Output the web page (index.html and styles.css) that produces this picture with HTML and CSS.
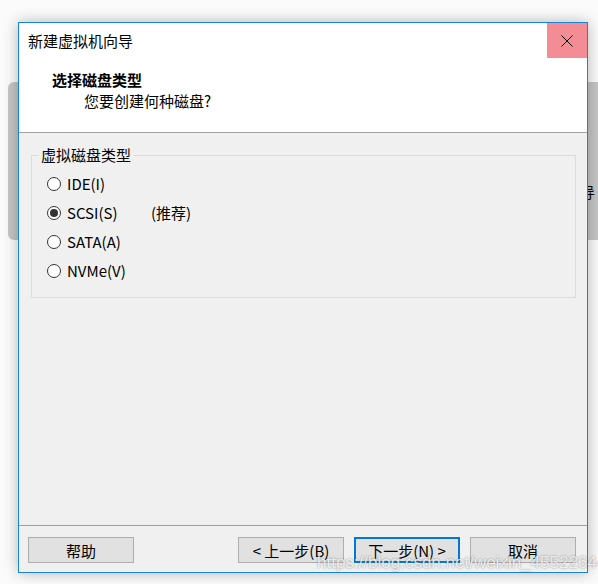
FILE: index.html
```html
<!DOCTYPE html>
<html lang="zh-CN">
<head>
  <meta charset="UTF-8">
  <title>新建虚拟机向导</title>
  <link rel="stylesheet" href="styles.css">
</head>
<body>
  <!-- window behind the dialog -->
  <div class="back-window"><span class="back-text">导</span></div>

  <div class="dialog">
    <div class="titlebar">
      <span class="title">新建虚拟机向导</span>
      <div class="close-btn">
        <svg width="12" height="12" viewBox="0 0 12 12">
          <path d="M0.5 0.5 L11.5 11.5 M11.5 0.5 L0.5 11.5" stroke="#000" stroke-width="1" fill="none"/>
        </svg>
      </div>
    </div>

    <div class="header">
      <div class="header-title">选择磁盘类型</div>
      <div class="header-sub">您要创建何种磁盘?</div>
    </div>

    <div class="content">
      <fieldset class="group">
        <legend>虚拟磁盘类型</legend>
        <div class="radio-row"><span class="radio"></span><span class="radio-label">IDE(I)</span></div>
        <div class="radio-row"><span class="radio checked"></span><span class="radio-label">SCSI(S)</span><span class="hint">(推荐)</span></div>
        <div class="radio-row"><span class="radio"></span><span class="radio-label">SATA(A)</span></div>
        <div class="radio-row"><span class="radio"></span><span class="radio-label">NVMe(V)</span></div>
      </fieldset>
    </div>

    <div class="footer">
      <button class="btn">帮助</button>
      <div class="footer-right">
        <button class="btn">&lt; 上一步(B)</button>
        <button class="btn default">下一步(N) &gt;</button>
        <button class="btn">取消</button>
      </div>
    </div>
  </div>

  <div class="watermark">https://blog.csdn.net/weixin_45522644</div>
</body>
</html>
```

FILE: styles.css
```css
body {
  margin: 0;
  width: 598px;
  height: 584px;
  background-color: #fbfbfb;
  font-family: "Noto Sans CJK SC", "Noto Sans", sans-serif;
  font-size: 15px;
  color: #000;
  position: relative;
  overflow: hidden;
}

.back-window {
  position: absolute;
  left: 8px;
  top: 82px;
  width: 610px;
  height: 158px;
  background-color: #c6c6c6;
  border-radius: 6px;
}
.back-text {
  position: absolute;
  left: 572px;
  top: 101px;
  font-size: 15px;
  line-height: 18px;
}

.dialog {
  position: relative;
  margin: 22px 0 0 18px;
  width: 568px;
  height: 549px;
  border: 1px solid #1883d7;
  background-color: #f0f0f0;
  box-shadow: 0 0 14px rgba(0, 0, 0, 0.28);
  display: flex;
  flex-direction: column;
}

.titlebar {
  height: 35px;
  background-color: #fff;
  display: flex;
  align-items: center;
  justify-content: space-between;
}
.title {
  padding-left: 9px;
  line-height: 20px;
}
.close-btn {
  width: 40px;
  height: 35px;
  background-color: #f38c94;
  display: flex;
  align-items: center;
  justify-content: center;
}

.header {
  height: 75px;
  background-color: #fff;
  border-bottom: 1px solid #a0a0a0;
  padding-left: 33px;
  box-sizing: border-box;
  padding-top: 11px;
}
.header-title {
  font-weight: 700;
  line-height: 21px;
}
.header-sub {
  padding-left: 32px;
  line-height: 21px;
}

.content {
  flex: 1;
  padding: 0 11px 0 12px;
}
.group {
  margin: 13px 0 0 0;
  padding: 5px 0 12px 15px;
  border: 1px solid #dcdcdc;
}
.group legend {
  margin-left: -9px;
  padding: 0 3px 0 3px;
  line-height: 18px;
}

.radio-row {
  height: 29px;
  display: flex;
  align-items: center;
}
.radio {
  width: 14px;
  height: 14px;
  box-sizing: border-box;
  border: 1px solid #333;
  border-radius: 50%;
  background-color: #fff;
  margin-right: 6px;
  display: flex;
  align-items: center;
  justify-content: center;
}
.radio.checked::after {
  content: "";
  width: 8px;
  height: 8px;
  border-radius: 50%;
  background-color: #333;
}
.radio-label {
  min-width: 84px;
}

.footer {
  height: 47px;
  border-top: 1px solid #a0a0a0;
  padding: 11px 11px 0 9px;
  box-sizing: border-box;
  display: flex;
  justify-content: space-between;
  align-items: flex-start;
}
.footer-right {
  display: flex;
  gap: 10px;
}
.btn {
  width: 106px;
  height: 26px;
  padding: 0;
  background-color: #e1e1e1;
  border: 1px solid #adadad;
  font-family: "Noto Sans CJK SC", "Noto Sans", sans-serif;
  font-size: 15px;
  color: #000;
}
.btn.default {
  border: 2px solid #0078d7;
}

.watermark {
  position: absolute;
  left: 317px;
  top: 553px;
  font-family: "Liberation Sans", Arial, sans-serif;
  font-size: 17px;
  color: rgba(255, 255, 255, 0.8);
  text-shadow: 0 0 2px rgba(0, 0, 0, 0.45);
  white-space: nowrap;
}
```
